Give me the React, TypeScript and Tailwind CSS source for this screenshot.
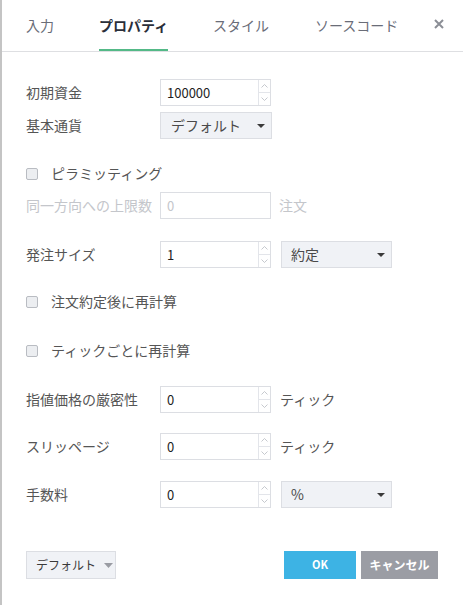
import React from 'react';

const font = { fontFamily: '"Noto Sans CJK JP", "Noto Sans", sans-serif' };

const Spinner = ({ disabled }: { disabled?: boolean }) => (
  <div className={`flex w-[12px] flex-col border-l ${disabled ? 'border-transparent' : 'border-[#e3e5ea]'}`}>
    {!disabled && (
      <>
        <div className="flex flex-1 items-center justify-center border-b border-[#e3e5ea]">
          <svg width="7" height="4" viewBox="0 0 7 4"><path d="M0.5 3.5 L3.5 0.5 L6.5 3.5" fill="none" stroke="#b8bbc2" strokeWidth="0.8" /></svg>
        </div>
        <div className="flex flex-1 items-center justify-center">
          <svg width="7" height="4" viewBox="0 0 7 4"><path d="M0.5 0.5 L3.5 3.5 L6.5 0.5" fill="none" stroke="#b8bbc2" strokeWidth="0.8" /></svg>
        </div>
      </>
    )}
  </div>
);

const NumInput = ({ value, disabled }: { value: string; disabled?: boolean }) => (
  <div className="flex h-[27px] w-[111px] border border-[#dcdee3] bg-white">
    <div className={`flex flex-1 items-center pl-[6px] text-[13px] ${disabled ? 'text-[#c4c6cb]' : 'text-[#1e1e1e]'}`}>{value}</div>
    <Spinner disabled={disabled} />
  </div>
);

const Caret = () => (
  <svg width="8" height="4" viewBox="0 0 8 4"><path d="M0 0 L8 0 L4 4 Z" fill="#3a3a3a" /></svg>
);

const Select = ({ value, w, pl, pr }: { value: string; w: string; pl: string; pr: string }) => (
  <div className={`flex h-[27px] items-center justify-between border border-[#dcdee3] bg-[#f0f2f6] text-[14px] text-[#4a4a4a] ${w} ${pl} ${pr}`}>
    <span>{value}</span>
    <Caret />
  </div>
);

const Label = ({ children, muted }: { children: React.ReactNode; muted?: boolean }) => (
  <div className={`w-[134px] text-[14px] ${muted ? 'text-[#c4c6cb]' : 'text-[#555555]'}`}>{children}</div>
);

const Check = ({ label, className }: { label: string; className: string }) => (
  <div className={`flex h-[27px] items-center ${className}`}>
    <div className="h-[12px] w-[12px] rounded-[2px] border border-[#b9bcc2] bg-[#eceef1]" />
    <span className="ml-[13px] text-[14px] text-[#555555]">{label}</span>
  </div>
);

export default function App() {
  const tabs = [
    { t: '入力', w: 'w-[73px]' },
    { t: 'プロパティ', w: 'w-[114px]', active: true },
    { t: 'スタイル', w: 'w-[102px]' },
    { t: 'ソースコード', w: 'w-[100px]' },
  ];
  return (
    <div className="h-[605px] w-[463px] overflow-hidden border-l-2 border-[#c4c4c4] bg-white" style={font}>
      <div className="flex h-[52px] items-stretch border-b border-[#dedfe2] pl-[24px]">
        {tabs.map((tab) => (
          <div key={tab.t} className={`${tab.w} flex items-stretch`}>
            <div
              className={`flex items-center border-b-2 pt-[2px] text-[14px] ${
                tab.active ? 'border-[#53b987] font-bold text-[#2a2e39]' : 'border-transparent text-[#6a6d78]'
              }`}
            >
              {tab.t}
            </div>
          </div>
        ))}
        <div className="ml-auto mr-[19px] flex items-center pb-[4px]">
          <svg width="10" height="10" viewBox="0 0 10 10">
            <path d="M1 1 L9 9 M9 1 L1 9" stroke="#8b8e96" strokeWidth="2" />
          </svg>
        </div>
      </div>

      <div className="pl-[24px]">
        <div className="mt-[27px] flex h-[27px] items-center">
          <Label>初期資金</Label>
          <NumInput value="100000" />
        </div>
        <div className="mt-[6px] flex h-[27px] items-center">
          <Label>基本通貨</Label>
          <Select value="デフォルト" w="w-[112px]" pl="pl-[10px]" pr="pr-[6px]" />
        </div>

        <Check label="ピラミッティング" className="mt-[21px]" />

        <div className="mt-[5px] flex h-[27px] items-center">
          <Label muted>同一方向への上限数</Label>
          <NumInput value="0" disabled />
          <span className="ml-[8px] text-[14px] text-[#c4c6cb]">注文</span>
        </div>

        <div className="mt-[22px] flex h-[27px] items-center">
          <Label>発注サイズ</Label>
          <NumInput value="1" />
          <div className="ml-[10px]">
            <Select value="約定" w="w-[111px]" pl="pl-[9px]" pr="pr-[6px]" />
          </div>
        </div>

        <Check label="注文約定後に再計算" className="mt-[20px]" />
        <Check label="ティックごとに再計算" className="mt-[22px]" />

        <div className="mt-[22px] flex h-[27px] items-center">
          <Label>指値価格の厳密性</Label>
          <NumInput value="0" />
          <span className="ml-[9px] text-[14px] text-[#555555]">ティック</span>
        </div>
        <div className="mt-[20px] flex h-[27px] items-center">
          <Label>スリッページ</Label>
          <NumInput value="0" />
          <span className="ml-[9px] text-[14px] text-[#555555]">ティック</span>
        </div>
        <div className="mt-[21px] flex h-[27px] items-center">
          <Label>手数料</Label>
          <NumInput value="0" />
          <div className="ml-[10px]">
            <Select value="%" w="w-[111px]" pl="pl-[9px]" pr="pr-[6px]" />
          </div>
        </div>

        <div className="mt-[43px] flex items-center">
          <div className="flex h-[28px] w-[90px] items-center border border-[#dcdee3] bg-[#f0f2f6] pl-[9px] text-[12px] text-[#3a3a3a]">
            <span>デフォルト</span>
            <svg className="ml-[8px]" width="9" height="5" viewBox="0 0 9 5"><path d="M0 0 L9 0 L4.5 5 Z" fill="#9a9ca3" /></svg>
          </div>
          <div className="ml-auto flex h-[28px] w-[72px] items-center justify-center bg-[#3db3e4] pb-[2px] text-[11px] font-bold text-white">OK</div>
          <div className="ml-[5px] mr-[25px] flex h-[28px] w-[77px] items-center justify-center bg-[#9b9da4] text-[12px] font-bold text-white">キャンセル</div>
        </div>
      </div>
    </div>
  );
}
